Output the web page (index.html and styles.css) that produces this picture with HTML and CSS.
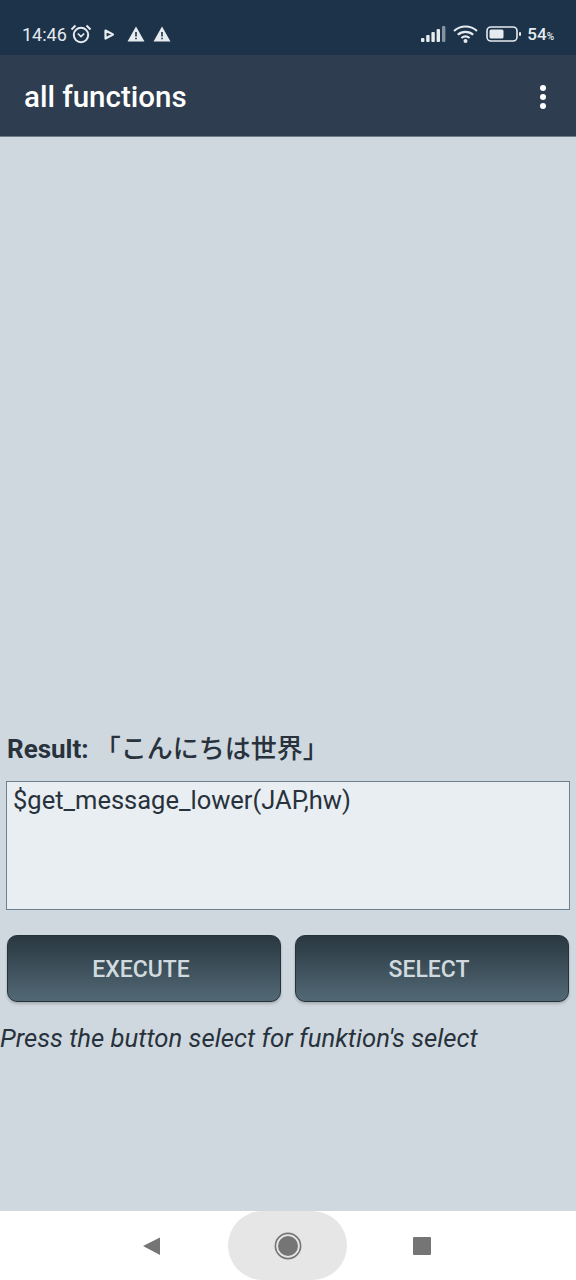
FILE: index.html
```html
<!DOCTYPE html>
<html lang="en">
<head>
    <meta charset="UTF-8">
    <meta name="viewport" content="width=device-width, initial-scale=1.0">
    <title>all functions</title>
    <link rel="stylesheet" href="styles.css">
</head>
<body>

    <div class="status-bar">
        <div class="status-left">
            <span class="clock">14:46</span>
            <svg class="alarm" width="22" height="20" viewBox="0 0 22 20">
                <circle cx="11" cy="11" r="7.2" fill="none" stroke="#e6ebf0" stroke-width="2"/>
                <path d="M7.8 9.5L11 12.5L14.2 9.5" fill="none" stroke="#e6ebf0" stroke-width="1.7"/>
                <path d="M1.5 5.5L5.5 1.5M20.5 5.5L16.5 1.5" stroke="#e6ebf0" stroke-width="2"/>
            </svg>
            <svg class="play" width="11" height="11" viewBox="0 0 11 11">
                <path d="M1.5 1.5L9 5.5L1.5 9.5Z" fill="#1c3349" stroke="#e6ebf0" stroke-width="2.2" stroke-linejoin="round"/>
            </svg>
            <svg class="warn" width="18" height="16" viewBox="0 0 18 16">
                <path d="M9 0.5L17.5 15.5H0.5Z" fill="#e6ebf0"/>
                <path d="M8.2 6H9.8V10.5H8.2ZM8.2 11.7H9.8V13.2H8.2Z" fill="#1c3349"/>
            </svg>
            <svg class="warn" width="18" height="16" viewBox="0 0 18 16">
                <path d="M9 0.5L17.5 15.5H0.5Z" fill="#e6ebf0"/>
                <path d="M8.2 6H9.8V10.5H8.2ZM8.2 11.7H9.8V13.2H8.2Z" fill="#1c3349"/>
            </svg>
        </div>
        <div class="status-right">
            <svg class="signal" width="25" height="16" viewBox="0 0 25 16">
                <rect x="0" y="12" width="3.4" height="4" rx="1" fill="#e6ebf0"/>
                <rect x="5.2" y="9" width="3.4" height="7" rx="1" fill="#e6ebf0"/>
                <rect x="10.4" y="6" width="3.4" height="10" rx="1" fill="#e6ebf0"/>
                <rect x="15.6" y="3" width="3.4" height="13" rx="1" fill="#e6ebf0"/>
                <rect x="21" y="0" width="3.4" height="16" rx="1" fill="#8592a0"/>
            </svg>
            <svg class="wifi" width="25" height="18" viewBox="0 0 25 18">
                <path d="M1 6C7.5 0 17.5 0 24 6M4.8 9.8C9.2 5.8 15.8 5.8 20.2 9.8M8.4 13C10.8 11 14.2 11 16.6 13" fill="none" stroke="#e6ebf0" stroke-width="2.2"/>
                <circle cx="12.5" cy="16" r="2" fill="#e6ebf0"/>
            </svg>
            <svg class="battery" width="35" height="16" viewBox="0 0 35 16">
                <rect x="1" y="1" width="30" height="14" rx="4" fill="none" stroke="#e6ebf0" stroke-width="1.6"/>
                <rect x="3.5" y="3.5" width="14" height="9" rx="1.5" fill="#e6ebf0"/>
                <rect x="33" y="6" width="2" height="4" rx="1" fill="#e6ebf0"/>
            </svg>
            <span class="percent">54<small>%</small></span>
        </div>
    </div>

    <header class="app-bar">
        <h1>all functions</h1>
        <div class="menu-dots"><i></i><i></i><i></i></div>
    </header>

    <main class="content">
        <div class="result-row">
            <strong>Result:</strong>
            <span class="result-value">「こんにちは世界」</span>
        </div>
        <div class="command-box">$get_message_lower(JAP,hw)</div>
        <div class="buttons">
            <button>EXECUTE</button>
            <button>SELECT</button>
        </div>
        <p class="hint">Press the button select for funktion's select</p>
    </main>

    <nav class="nav-bar">
        <svg width="20" height="20" viewBox="0 0 20 20">
            <path d="M1 10L18 1.5V19Z" fill="#757575"/>
        </svg>
        <div class="home-pill">
            <svg width="28" height="28" viewBox="0 0 28 28">
                <circle cx="14" cy="14" r="12.6" fill="none" stroke="#757575" stroke-width="1.6"/>
                <circle cx="14" cy="14" r="10" fill="#757575"/>
            </svg>
        </div>
        <div class="recent"></div>
    </nav>

</body>
</html>
```

FILE: styles.css
```css
* {
    box-sizing: border-box;
}
html, body {
    margin: 0;
    height: 100%;
}
body {
    display: flex;
    flex-direction: column;
    height: 1280px;
    background: #d0d8df;
    color: #28323c;
    font-family: Roboto, "Noto Sans CJK JP", sans-serif;
}
.status-bar {
    height: 55px;
    flex: none;
    display: flex;
    justify-content: space-between;
    align-items: center;
    padding: 13px 22px 0 22px;
    background: #1c3349;
    color: #e6ebf0;
}
.status-left, .status-right {
    display: flex;
    align-items: center;
}
.clock {
    font-size: 18px;
    margin-right: 3px;
}
.play {
    margin: 0 0 0 12px;
}
.warn {
    margin-left: 8px;
}
.play + .warn {
    margin-left: 12px;
}
.signal {
    margin-right: 7px;
}
.wifi {
    margin-right: 8px;
}
.battery {
    margin-right: 6px;
}
.percent {
    font-size: 17px;
    font-weight: 500;
}
.percent small {
    font-size: 10px;
}
.app-bar {
    height: 82px;
    flex: none;
    display: flex;
    justify-content: space-between;
    align-items: center;
    padding: 2px 30px 0 24px;
    background: #2e3e50;
    border-bottom: 1px solid #6f7d8a;
    color: #fff;
}
.app-bar h1 {
    margin: 0;
    font-size: 29.5px;
    font-weight: 500;
}
.menu-dots {
    display: flex;
    flex-direction: column;
    gap: 3px;
}
.menu-dots i {
    width: 6px;
    height: 6px;
    border-radius: 50%;
    background: #fff;
}
.content {
    flex: 1;
    display: flex;
    flex-direction: column;
    justify-content: flex-end;
    padding-bottom: 156px;
}
.result-row {
    display: flex;
    align-items: center;
    height: 32px;
    padding-left: 7px;
    font-size: 26px;
}
.result-value {
    padding-bottom: 5px;
    font-weight: 500;
    margin-left: 6px;
}
.command-box {
    height: 129px;
    margin: 16px 6px 0 6px;
    padding: 3px 6px;
    background: #e9eef2;
    border: 1px solid #6b7f8e;
    font-size: 25.5px;
}
.buttons {
    display: grid;
    grid-template-columns: 1fr 1fr;
    gap: 14px;
    margin: 25px 7px 0 7px;
}
.buttons button {
    height: 67px;
    padding: 1px 6px 0 0;
    border: 1px solid #22313a;
    border-radius: 10px;
    background: linear-gradient(#293740, #526975);
    box-shadow: 0 2px 3px rgba(0, 0, 0, 0.2);
    color: #d0dadf;
    font-family: Roboto, sans-serif;
    font-size: 23px;
    font-weight: 500;
}
.hint {
    margin: 19px 0 0 0;
    font-size: 25.7px;
    line-height: 34px;
    font-style: italic;
}
.nav-bar {
    height: 69px;
    flex: none;
    display: flex;
    align-items: center;
    padding-left: 142px;
    background: #fff;
}
.home-pill {
    width: 119px;
    height: 69px;
    margin-left: 66px;
    display: flex;
    align-items: center;
    justify-content: center;
    border-radius: 35px;
    background: #e6e6e6;
}
.recent {
    width: 18px;
    height: 18px;
    margin-left: 66px;
    border-radius: 1px;
    background: #757575;
}
```
